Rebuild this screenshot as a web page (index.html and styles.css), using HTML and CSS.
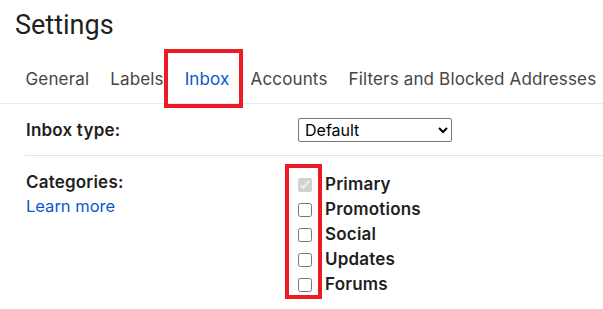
FILE: index.html
```html
<!DOCTYPE html>
<html lang="en">
<head>
  <meta charset="UTF-8">
  <title>Settings</title>
  <link rel="stylesheet" href="styles.css">
</head>
<body>
  <h1 class="title">Settings</h1>

  <nav class="tabs">
    <a class="tab">General</a>
    <a class="tab">Labels</a>
    <a class="tab tab-active">Inbox</a>
    <a class="tab">Accounts</a>
    <a class="tab">Filters and Blocked Addresses</a>
  </nav>

  <div class="row row-type">
    <div class="row-label">Inbox type:</div>
    <select class="type-select">
      <option>Default</option>
    </select>
  </div>

  <div class="row row-categories">
    <div class="row-label">
      Categories:
      <a class="learn-more">Learn more</a>
    </div>
    <div class="category-boxes">
      <input type="checkbox" checked disabled>
      <input type="checkbox">
      <input type="checkbox">
      <input type="checkbox">
      <input type="checkbox">
    </div>
    <ul class="category-list">
      <li>Primary</li>
      <li>Promotions</li>
      <li>Social</li>
      <li>Updates</li>
      <li>Forums</li>
    </ul>
  </div>
</body>
</html>
```

FILE: styles.css
```css
* {
  box-sizing: border-box;
  margin: 0;
  padding: 0;
}

body {
  font-family: Inter, "Noto Sans", sans-serif;
  background: white;
  color: #1f1f1f;
}

.title {
  font-family: Roboto, sans-serif;
  font-weight: 400;
  font-size: 27px;
  line-height: 34px;
  padding: 8px 0 0 15px;
  height: 54px;
}

.tabs {
  display: flex;
  height: 50px;
  align-items: center;
  padding-left: 15px;
  padding-top: 1px;
  border-bottom: 1px solid #e8eaed;
}

.tab {
  position: relative;
  font-family: Inter, sans-serif;
  font-size: 17px;
  letter-spacing: 0.15px;
  color: #444746;
  padding: 0 10.5px;
  white-space: nowrap;
}

.tab-active {
  color: #0b57d0;
}

.tab-active::after {
  content: "";
  position: absolute;
  left: -10px;
  right: -3px;
  top: -20px;
  bottom: -19px;
  border: 4px solid #ed1c24;
}

.row {
  display: flex;
  margin-left: 25px;
  border-bottom: 1px solid #e3e3e3;
}

.row-label {
  width: 273px;
  flex-shrink: 0;
  padding-left: 1px;
  font-weight: 600;
  font-size: 17px;
  letter-spacing: 0.2px;
}

.row-type {
  height: 52px;
  align-items: center;
}

.type-select {
  width: 154px;
  height: 24px;
  font-family: Inter, sans-serif;
  font-size: 16px;
  color: black;
  border: 1px solid #767676;
  border-radius: 2px;
  background: white;
  padding-left: 2px;
}

.row-categories {
  border-bottom: none;
  padding-top: 16px;
}

.learn-more {
  display: block;
  font-weight: 400;
  font-size: 16.5px;
  letter-spacing: 0;
  color: #0b57d0;
  margin-top: 4px;
}

.category-boxes {
  display: grid;
  grid-auto-rows: 25px;
  align-items: center;
  margin: -8px 0 0 -13px;
  height: 135px;
  width: 37px;
  flex-shrink: 0;
  padding: 4px 0 0 9px;
  border: 4px solid #ed1c24;
}

.category-boxes input {
  width: 14px;
  height: 14px;
  margin: 0;
}

.category-list {
  list-style: none;
  margin-left: 3px;
  margin-top: 0;
}

.category-list li {
  height: 25px;
  line-height: 25px;
  font-weight: 600;
  font-size: 17px;
  letter-spacing: 0.2px;
}
```
